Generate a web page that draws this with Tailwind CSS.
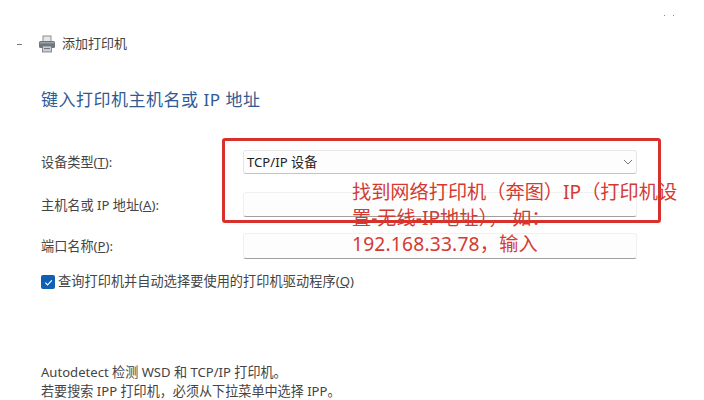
<!DOCTYPE html>
<html lang="zh-CN">
<head>
    <meta charset="UTF-8">
    <title>添加打印机</title>
    <script src="https://cdn.jsdelivr.net/npm/@tailwindcss/browser@4"></script>
</head>
<body class="bg-white font-['Noto_Sans','Noto_Sans_CJK_SC',sans-serif] text-[#444] overflow-hidden">
<div class="relative w-[704px] h-[400px] overflow-hidden">

    <!-- Title bar -->
    <div class="flex items-center h-[20px] mt-[34px] pl-[17px] text-[13px]">
        <span class="w-[5px] h-[1px] bg-[#777]"></span>
        <svg class="ml-[16px]" width="18" height="18" viewBox="0 0 18 18">
            <rect x="5" y="1" width="8" height="6" fill="#e4e6e8" stroke="#8a9096"/>
            <rect x="1" y="6" width="16" height="7" rx="1.5" fill="#6f767c"/>
            <rect x="2" y="7" width="14" height="1.5" fill="#9aa0a6"/>
            <rect x="4.5" y="11" width="9" height="6" fill="#c9cdd1" stroke="#70767c" stroke-width="0.8"/>
            <rect x="6" y="13" width="6" height="1" fill="#70767c"/>
        </svg>
        <span class="ml-[6px]">添加打印机</span>
    </div>

    <!-- Heading -->
    <h1 class="ml-[41px] mt-[34px] text-[17px] leading-[24px] text-[#2f5a93] tracking-[0.5px]">键入打印机主机名或 IP 地址</h1>

    <!-- Form -->
    <div class="mt-[38px] ml-[41px] w-[596px] text-[13.15px] flex flex-col">
        <div class="flex items-center h-[24px]">
            <label class="w-[202px] pt-[2px]">设备类型(<span class="underline">T</span>):</label>
            <div class="flex-1 h-[24px] flex items-center justify-between pl-[2px] pr-[2px] bg-[#fdfdfd] border border-[#e8e8e8] border-b-[#c4c4c4] rounded-[3px] text-[#222]">
                <span class="pl-[1px] pt-[1px]">TCP/IP 设备</span>
                <svg width="12" height="12" viewBox="0 0 12 12" fill="none" stroke="#777" stroke-width="1"><path d="M2 4l4 4 4-4"/></svg>
            </div>
        </div>
        <div class="flex items-center h-[25px] mt-[18px]">
            <label class="w-[202px] pt-[2px]">主机名或 IP 地址(<span class="underline">A</span>):</label>
            <div class="flex-1 h-[25px] bg-[#fdfdfd] border border-[#f0f0f0] border-b-[#a0a0a0] rounded-[3px]"></div>
        </div>
        <div class="flex items-center h-[26px] mt-[16px]">
            <label class="w-[202px] pt-[2px]">端口名称(<span class="underline">P</span>):</label>
            <div class="flex-1 h-[26px] bg-[#fdfdfd] border border-[#f0f0f0] border-b-[#a0a0a0] rounded-[3px]"></div>
        </div>
        <div class="flex items-center mt-[14px] h-[18px]">
            <span class="w-[14px] h-[14px] rounded-[2px] bg-[#0f5fb5] flex items-center justify-center">
                <svg width="9" height="9" viewBox="0 0 10 10" fill="none" stroke="#fff" stroke-width="1.3"><path d="M1.5 5.2l2.4 2.4 4.8-5"/></svg>
            </span>
            <span class="ml-[3px] whitespace-nowrap tracking-[0.08px]">查询打印机并自动选择要使用的打印机驱动程序(<span class="underline">Q</span>)</span>
        </div>
    </div>

    <!-- Footer note -->
    <div class="ml-[41px] mt-[72px] text-[13.1px] leading-[19px] whitespace-nowrap">
        <p>Autodetect 检测 WSD 和 TCP/IP 打印机。</p>
        <p>若要搜索 IPP 打印机，必须从下拉菜单中选择 IPP。</p>
    </div>

    <!-- Red annotation over the form -->
    <div class="absolute left-[222px] top-[138px] w-[439px] h-[85px] border-[3px] border-[#d8302a] rounded-[3px]"></div>
    <div class="absolute left-[352px] top-[179px] text-[19.2px] leading-[26px] text-[#d43a32] whitespace-nowrap">
        <p>找到网络打印机（奔图）IP（打印机设</p>
        <p>置-无线-IP地址）， 如：</p>
        <p class="tracking-[0.2px]">192.168.33.78，输入</p>
    </div>

    <!-- Stray marks top right -->
    <span class="absolute left-[664px] top-[15px] w-[1px] h-[1px] bg-[#888]"></span>
    <span class="absolute left-[673px] top-[15px] w-[1px] h-[1px] bg-[#888]"></span>
</div>
</body>
</html>
